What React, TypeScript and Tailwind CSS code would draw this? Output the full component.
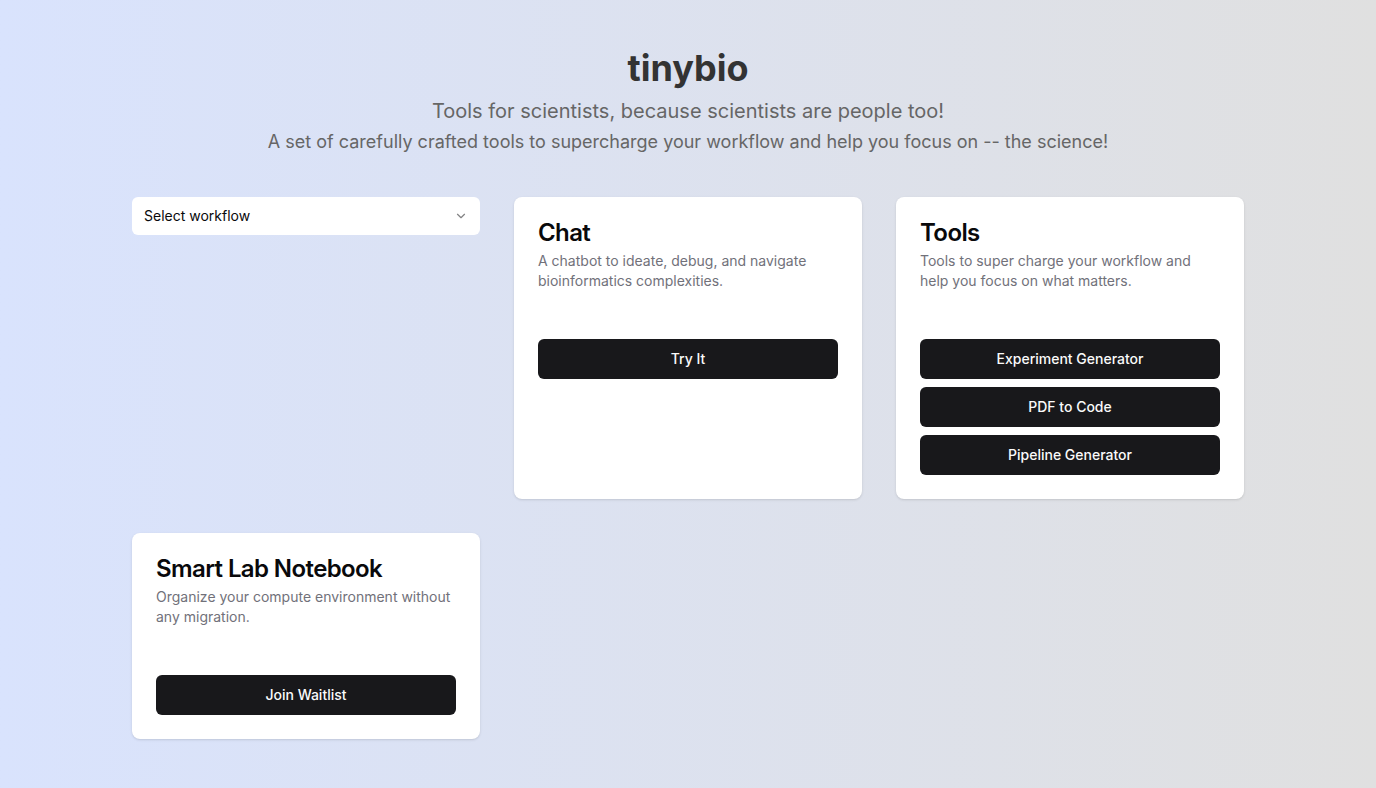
import React from 'react';

function Card({ title, description, children }: { title: string; description: string; children: React.ReactNode }) {
  return (
    <div className="bg-white rounded-lg shadow-sm p-6 flex flex-col">
      <h3 className="text-2xl font-semibold leading-none tracking-tight text-[#09090b]">{title}</h3>
      <p className="mt-1.5 text-sm text-[#71717a] leading-5">{description}</p>
      <div className="mt-12 flex flex-col gap-2">{children}</div>
    </div>
  );
}

function Btn({ label }: { label: string }) {
  return (
    <button className="h-10 w-full rounded-md bg-[#18181b] text-[#fafafa] text-sm font-medium">{label}</button>
  );
}

export default function App() {
  return (
    <div className="min-h-[788px] w-full bg-gradient-to-r from-[#d9e3fd] to-[#e0e0e0] font-['Inter',sans-serif]">
      <div className="pt-[44px] text-center">
        <h1 className="text-4xl font-bold text-[#333333] leading-[48px]">tinybio</h1>
        <p className="mt-[5px] text-xl text-[#666666] leading-7">Tools for scientists, because scientists are people too!</p>
        <p className="mt-[3px] text-lg text-[#666666] leading-7">A set of carefully crafted tools to supercharge your workflow and help you focus on -- the science!</p>
      </div>
      <div className="mx-auto mt-[41px] w-[1112px] grid grid-cols-3 gap-[34px]">
        <div>
          <div className="h-[38px] bg-white rounded-md flex items-center justify-between pl-3 pr-3 text-sm text-[#09090b]">
            <span>Select workflow</span>
            <svg width="14" height="14" viewBox="0 0 24 24" fill="none" stroke="currentColor" strokeWidth="2" strokeLinecap="round" strokeLinejoin="round" className="opacity-50"><path d="m6 9 6 6 6-6" /></svg>
          </div>
        </div>
        <Card title="Chat" description="A chatbot to ideate, debug, and navigate bioinformatics complexities.">
          <Btn label="Try It" />
        </Card>
        <Card title="Tools" description="Tools to super charge your workflow and help you focus on what matters.">
          <Btn label="Experiment Generator" />
          <Btn label="PDF to Code" />
          <Btn label="Pipeline Generator" />
        </Card>
        <Card title="Smart Lab Notebook" description="Organize your compute environment without any migration.">
          <Btn label="Join Waitlist" />
        </Card>
      </div>
    </div>
  );
}
